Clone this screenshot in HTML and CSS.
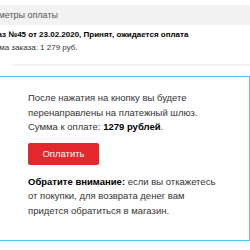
FILE: index.html
```html
<!DOCTYPE html>
<html lang="ru">
<head>
    <meta charset="UTF-8">
    <title>Оплата заказа</title>
    <link rel="stylesheet" href="styles.css">
</head>
<body>
    <div id="page">
        <div class="sectionTitle">Параметры оплаты</div>
        <div class="orderInfo">
            <div class="orderTitle">Заказ №45 от 23.02.2020, Принят, ожидается оплата</div>
            <div class="orderSum">Сумма заказа: 1 279 руб.</div>
        </div>
        <div class="separator"></div>
        <div class="payRow">
            <div class="connector"></div>
            <div class="payBox">
                <p>После нажатия на кнопку вы будете перенаправлены на платежный шлюз. Сумма к оплате: <b>1279 рублей</b>.</p>
                <button class="payButton">Оплатить</button>
                <p><b>Обратите внимание:</b> если вы откажетесь от покупки, для возврата денег вам придется обратиться в магазин.</p>
            </div>
        </div>
    </div>
</body>
</html>
```

FILE: styles.css
```css
body {
    margin: 0;
    font-family: "Liberation Sans", Arial, sans-serif;
    font-size: 9px;
    color: #333;
    background-color: #fff;
    overflow: hidden;
}

#page {
    margin-left: -20px;
    padding-top: 5px;
}

.sectionTitle {
    background-color: #f2f2f2;
    height: 20px;
    line-height: 20px;
    text-indent: -3px;
    color: #555;
}

.orderInfo {
    padding: 3px 0 0 4px;
    font-size: 8px;
    line-height: 13px;
}

.orderTitle {
    font-weight: bold;
    color: #000;
}

.orderSum {
    color: #333;
}

.separator {
    height: 2px;
    background-color: #f4f4f4;
    margin: 10px 0 0 32px;
}

.payRow {
    display: flex;
    margin-top: 10px;
}

.connector {
    width: 28px;
    height: 1px;
    margin-top: 84px;
    background-color: #9a9a9a;
}

.payBox {
    margin-left: 3px;
    width: 400px;
    border: 1px solid #59c1ea;
    border-left: 2px solid #95d8f3;
    padding: 14px 31px 22px 31px;
    font-size: 9.5px;
}

.payBox p {
    margin: 0;
    line-height: 14.5px;
    width: 190px;
}

.payBox b {
    color: #000;
}

.payButton {
    display: block;
    margin: 8px 0 10px 0;
    width: 71px;
    height: 22px;
    padding: 0;
    border: none;
    border-radius: 2px;
    background-color: #e2282c;
    color: #fff;
    font-family: "Liberation Sans", Arial, sans-serif;
    font-size: 9.5px;
}
```
